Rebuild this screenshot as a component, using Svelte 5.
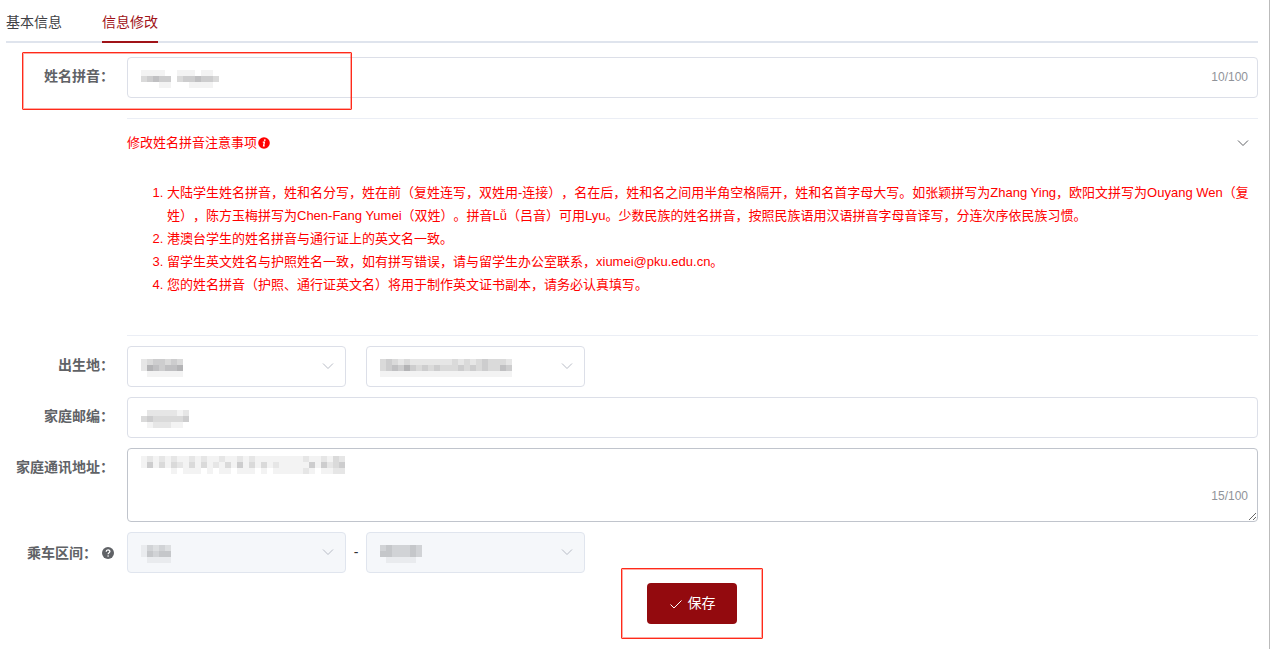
<script>
  let birthProvince = $state('');
  let birthCity = $state('');
  let tab = $state('edit');
  let noteOpen = $state(true);

  const tabs = [
    { id: 'basic', label: '基本信息' },
    { id: 'edit', label: '信息修改' }
  ];

  const notes = [
    '大陆学生姓名拼音，姓和名分写，姓在前（复姓连写，双姓用-连接），名在后，姓和名之间用半角空格隔开，姓和名首字母大写。如张颖拼写为Zhang Ying，欧阳文拼写为Ouyang Wen（复姓），陈方玉梅拼写为Chen-Fang Yumei（双姓）。拼音Lǚ（吕音）可用Lyu。少数民族的姓名拼音，按照民族语用汉语拼音字母音译写，分连次序依民族习惯。',
    '港澳台学生的姓名拼音与通行证上的英文名一致。',
    '留学生英文姓名与护照姓名一致，如有拼写错误，请与留学生办公室联系，xiumei@pku.edu.cn。',
    '您的姓名拼音（护照、通行证英文名）将用于制作英文证书副本，请务必认真填写。'
  ];

  // private values are shown as 6px blocks, one hex digit of grey per block
  const masks = {
    name: ['1111001110110', '3454403445443', '0001100011110'],
    province: ['23443430', '26545560', '01111110'],
    city: ['3432322222223232343332', '3454643434333434343354', '1111111111111111111111'],
    postcode: ['02222212', '34333334', '01222110'],
    address: ['1212121121211211212111111112112132', '1413132131312131413131211111414234', '0000010111010110111010111112101122'],
    from: ['13232', '14344', '01111'],
    to: ['3433343', '4433343', '0111110']
  };
</script>

{#snippet mosaic(rows)}
  <svg class="mosaic" width={rows[0].length * 6} height="18" shape-rendering="crispEdges" aria-hidden="true">
    {#each rows as row, y}
      {#each row as level, x}
        <rect x={x * 6} y={y * 6} width="6" height="6" fill="#303034" fill-opacity={parseInt(level, 16) * 0.06} />
      {/each}
    {/each}
  </svg>
{/snippet}

{#snippet arrow()}
  <svg class="arrow" viewBox="0 0 12 12" aria-hidden="true"><path d="M1 3.5 6 8.5 11 3.5" /></svg>
{/snippet}

<div class="page">
  <nav class="tabs">
    {#each tabs as t}
      <a href="#{t.id}" class:active={tab === t.id} onclick={() => (tab = t.id)}>{t.label}</a>
    {/each}
  </nav>

  <form onsubmit={(e) => e.preventDefault()}>
    <div class="row marked">
      <label for="name">姓名拼音：</label>
      <div class="field">
        <input id="name" type="text" />
        {@render mosaic(masks.name)}
        <span class="count">10/100</span>
      </div>
    </div>

    <section class="notice">
      <button type="button" class="notice-head" onclick={() => (noteOpen = !noteOpen)}>
        <span>修改姓名拼音注意事项</span>
        <svg class="info" viewBox="0 0 12 12" aria-hidden="true">
          <circle cx="6" cy="6" r="5.8" fill="#f00" />
          <circle cx="6.8" cy="3.1" r="0.9" fill="#fff" />
          <path d="M4.8 5.2h1.6L5.6 8.9h1.1" fill="none" stroke="#fff" stroke-width="1.3" />
        </svg>
        {@render arrow()}
      </button>
      {#if noteOpen}
        <ol>
          {#each notes as note}
            <li>{note}</li>
          {/each}
        </ol>
      {/if}
    </section>

    <div class="row">
      <label for="province">出生地：</label>
      <div class="pair">
        <div class="field">
          <select id="province" bind:value={birthProvince}><option value=""></option></select>
          {@render mosaic(masks.province)}
          {@render arrow()}
        </div>
        <span class="dash"></span>
        <div class="field">
          <select aria-label="出生地" bind:value={birthCity}><option value=""></option></select>
          {@render mosaic(masks.city)}
          {@render arrow()}
        </div>
      </div>
    </div>

    <div class="row">
      <label for="postcode">家庭邮编：</label>
      <div class="field">
        <input id="postcode" type="text" />
        {@render mosaic(masks.postcode)}
      </div>
    </div>

    <div class="row">
      <label for="address">家庭通讯地址：</label>
      <div class="field area">
        <textarea id="address"></textarea>
        {@render mosaic(masks.address)}
        <span class="count">15/100</span>
      </div>
    </div>

    <div class="row">
      <label for="from" class="with-help">
        乘车区间：
        <svg class="help" viewBox="0 0 12 12" aria-hidden="true">
          <circle cx="6" cy="6" r="6" fill="#606266" />
          <path d="M4.2 4.8C4.2 2.4 7.9 2.4 7.9 4.6 7.9 5.8 6.1 5.8 6.1 7.3" fill="none" stroke="#fff" stroke-width="1.3" />
          <circle cx="6.1" cy="9" r="0.8" fill="#fff" />
        </svg>
      </label>
      <div class="pair">
        <div class="field">
          <select id="from" disabled><option></option></select>
          {@render mosaic(masks.from)}
          {@render arrow()}
        </div>
        <span class="dash">-</span>
        <div class="field">
          <select aria-label="乘车区间" disabled><option></option></select>
          {@render mosaic(masks.to)}
          {@render arrow()}
        </div>
      </div>
    </div>

    <div class="actions">
      <div class="save-box">
        <button type="submit" class="save">
          <svg viewBox="0 0 14 14" aria-hidden="true"><path d="M1.5 7.5 5 11 12.5 3.5" /></svg>
          <span>保存</span>
        </button>
      </div>
    </div>
  </form>
</div>

<style>
  :global(body) {
    margin: 0;
    background: #fff;
  }
  .page {
    box-sizing: border-box;
    min-height: 100vh;
    padding: 0 11px 0 6px;
    border-right: 1px solid #bbb;
    font-family: "Liberation Sans", "Noto Sans CJK SC", sans-serif;
    font-size: 14px;
    color: #606266;
    text-spacing-trim: space-all;
  }
  .tabs {
    display: flex;
    gap: 40px;
    height: 41px;
    border-bottom: 2px solid #dfe4ed;
    margin-bottom: 14px;
  }
  .tabs a {
    height: 41px;
    line-height: 44px;
    color: #404145;
    text-decoration: none;
  }
  .tabs a.active {
    color: #a01318;
    border-bottom: 2px solid #a01318;
  }
  form {
    display: flex;
    flex-direction: column;
    gap: 10px;
  }
  .row {
    display: grid;
    grid-template-columns: 108px minmax(0, 1fr);
    column-gap: 13px;
  }
  .row label {
    font-weight: 700;
    line-height: 38px;
    text-align: right;
    white-space: nowrap;
  }
  .row .with-help {
    display: flex;
    align-items: center;
    justify-content: flex-end;
  }
  .help {
    width: 12px;
    height: 12px;
    margin-left: 5px;
  }
  .marked {
    position: relative;
  }
  .marked::after,
  .save-box::after {
    content: "";
    position: absolute;
    box-sizing: border-box;
    border: 1px solid #ff2a1a;
    outline: 1px solid #ff2a1a66;
    outline-offset: -2px;
    border-radius: 1px;
    pointer-events: none;
  }
  .marked::after {
    left: 16px;
    top: -5px;
    width: 330px;
    height: 58px;
  }
  .field {
    position: relative;
    display: flex;
  }
  input,
  select,
  textarea {
    box-sizing: border-box;
    width: 100%;
    height: 41px;
    margin: 0;
    padding: 0 14px;
    border: 1px solid #dcdfe8;
    border-radius: 4px;
    background: #fff;
    font: inherit;
    color: #606266;
    appearance: none;
  }
  select:disabled {
    background: #f5f7fa;
    border-color: #e0e5ee;
    opacity: 1;
  }
  textarea {
    height: 74px;
    padding: 8px 14px;
    border-color: #c0c4cc;
    resize: vertical;
  }
  .mosaic {
    position: absolute;
    left: 14px;
    top: 13px;
    pointer-events: none;
  }
  .area .mosaic {
    top: 8px;
  }
  .count {
    position: absolute;
    right: 10px;
    top: 0;
    font-size: 12px;
    line-height: 41px;
    color: #909399;
  }
  .area .count {
    top: auto;
    bottom: 5px;
  }
  .arrow {
    width: 12px;
    height: 12px;
    fill: none;
    stroke: #b8bcc6;
    stroke-width: 1;
  }
  .field .arrow {
    position: absolute;
    right: 12px;
    top: 14px;
    pointer-events: none;
  }
  .pair {
    display: flex;
  }
  .pair .field {
    width: 219px;
  }
  .dash {
    width: 20px;
    line-height: 41px;
    text-align: center;
    color: #303133;
  }
  .notice {
    margin: 10px 0 0 121px;
    border-top: 1px solid #ebeef5;
    border-bottom: 1px solid #ebeef5;
    font-size: 13px;
    color: #f00;
  }
  .notice-head {
    display: flex;
    align-items: center;
    width: 100%;
    height: 48px;
    padding: 0 9px 0 0;
    border: 0;
    background: none;
    font: inherit;
    color: inherit;
  }
  .notice-head span {
    padding-bottom: 3px;
  }
  .notice-head .info {
    width: 12px;
    height: 12px;
    margin-left: 1px;
  }
  .notice-head .arrow {
    margin-left: auto;
    stroke: #606266;
  }
  ol {
    margin: 0;
    padding: 14px 0 39px 40px;
    line-height: 23px;
  }
  .actions {
    display: flex;
    justify-content: center;
    padding-left: 120px;
  }
  .save-box {
    position: relative;
  }
  .save-box::after {
    inset: -15px -26px;
  }
  .save {
    display: flex;
    align-items: center;
    justify-content: center;
    gap: 5px;
    width: 90px;
    height: 41px;
    padding: 0;
    border: 0;
    border-radius: 4px;
    background: #930a0e;
    color: #fff;
    font: inherit;
  }
  .save span {
    padding-bottom: 3px;
  }
  .save svg {
    width: 14px;
    height: 14px;
    fill: none;
    stroke: #fff;
    stroke-width: 1;
  }
</style>
